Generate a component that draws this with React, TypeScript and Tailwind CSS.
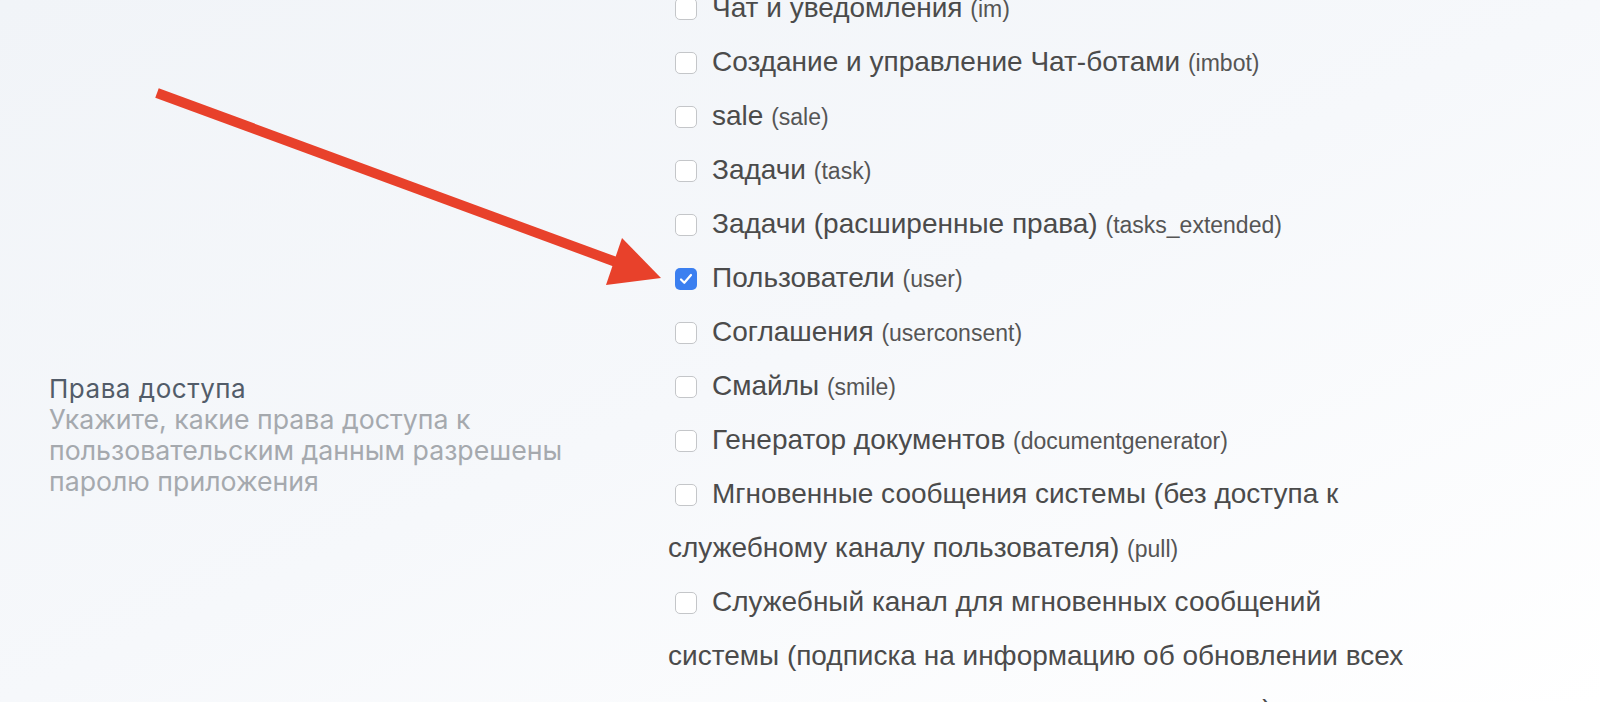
import React from 'react'

interface Scope {
    title: string;
    code: string;
    checked?: boolean;
}

const scopes: Scope[] = [
    { title: "Чат и уведомления", code: "im" },
    { title: "Создание и управление Чат-ботами", code: "imbot" },
    { title: "sale", code: "sale" },
    { title: "Задачи", code: "task" },
    { title: "Задачи (расширенные права)", code: "tasks_extended" },
    { title: "Пользователи", code: "user", checked: true },
    { title: "Соглашения", code: "userconsent" },
    { title: "Смайлы", code: "smile" },
    { title: "Генератор документов", code: "documentgenerator" },
    { title: "Мгновенные сообщения системы (без доступа к служебному каналу пользователя)", code: "pull" },
    { title: "Служебный канал для мгновенных сообщений системы (подписка на информацию об обновлении всех элементов системы доступных пользователю)", code: "pull_channel" },
];

const Checkbox: React.FC<{ checked?: boolean }> = ({ checked }) => {
    return (
        <span
            className={`inline-block overflow-hidden w-[22px] h-[22px] rounded-[5px] ml-[7px] mr-[15px] align-[-3px] ${
                checked ? "bg-[#3b7ff0]" : "bg-white border border-[#c4c6c9]"
            }`}
        >
            {checked && (
                <svg className="block mx-auto mt-[3px]" width="16" height="16" viewBox="0 0 16 16" fill="none">
                    <path d="M3 8.5 L6.3 11.8 L13 4" stroke="white" strokeWidth="2.2" strokeLinecap="round" strokeLinejoin="round" />
                </svg>
            )}
        </span>
    );
}

const App: React.FC = () => {
  return (
    <div className="relative w-full h-[702px] overflow-hidden bg-linear-to-br from-[#f1f4f8] via-[#f6f8fb] to-white">
        <div className="flex flex-row">
            {/* Label */}
            <div className="w-[668px] shrink-0 pl-[49px] pt-[373px] font-['Inter','Liberation_Sans',sans-serif] text-[26px] leading-[31px]">
                <div className="text-[#525c69] tracking-[0.02em]">Права доступа</div>
                <div className="text-[#a5a9ae] text-[26.7px] w-[560px]">
                    Укажите, какие права доступа к пользовательским данным разрешены паролю приложения
                </div>
            </div>
            {/* Scopes */}
            <div className="w-[750px] mt-[-19px] font-['Liberation_Sans',Arial,sans-serif] text-[28px] leading-[54px] text-[#4b4b4b]">
                {scopes.map((s) => (
                    <div key={s.code}>
                        <Checkbox checked={s.checked} />
                        {s.title} <span className="text-[23px] leading-none text-[#555]">({s.code})</span>
                    </div>
                ))}
            </div>
        </div>
        {/* Arrow */}
        <svg className="absolute inset-0 pointer-events-none" width="1600" height="702" viewBox="0 0 1600 702">
            <line x1="157" y1="93" x2="616" y2="262" stroke="#e8412b" strokeWidth="10" />
            <polygon points="622,238 661,278 606,285" fill="#e8412b" />
        </svg>
    </div>
  );
}

export default App
